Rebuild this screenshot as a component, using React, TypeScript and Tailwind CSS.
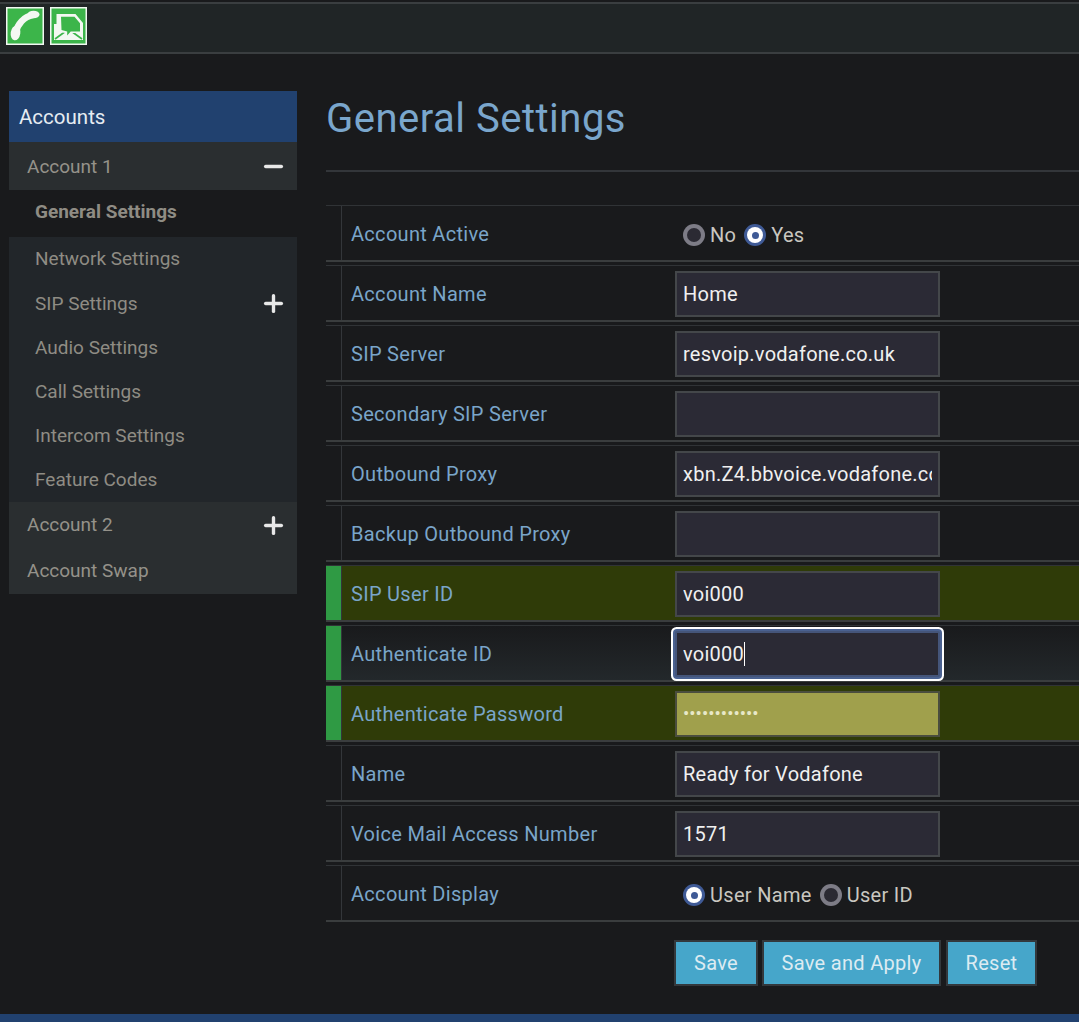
import React from 'react';
import { Minus, Plus } from 'lucide-react';

const SUB_ITEMS = ['Network Settings', 'SIP Settings', 'Audio Settings', 'Call Settings', 'Intercom Settings', 'Feature Codes'];

type Field = {
  label: string;
  value?: string;
  radios?: { label: string; checked: boolean }[];
  required?: 'plain' | 'highlight';
  focused?: boolean;
  password?: boolean;
};

const FIELDS: Field[] = [
  { label: 'Account Active', radios: [{ label: 'No', checked: false }, { label: 'Yes', checked: true }] },
  { label: 'Account Name', value: 'Home' },
  { label: 'SIP Server', value: 'resvoip.vodafone.co.uk' },
  { label: 'Secondary SIP Server', value: '' },
  { label: 'Outbound Proxy', value: 'xbn.Z4.bbvoice.vodafone.co.uk' },
  { label: 'Backup Outbound Proxy', value: '' },
  { label: 'SIP User ID', value: 'voi000', required: 'highlight' },
  { label: 'Authenticate ID', value: 'voi000', required: 'plain', focused: true },
  { label: 'Authenticate Password', value: 'abcdefghijkl', required: 'highlight', password: true },
  { label: 'Name', value: 'Ready for Vodafone' },
  { label: 'Voice Mail Access Number', value: '1571' },
  { label: 'Account Display', radios: [{ label: 'User Name', checked: true }, { label: 'User ID', checked: false }] },
];

function PhoneIcon() {
  return (
    <svg viewBox="0 0 38 38" className="h-[38px] w-[38px]">
      <rect x="0.75" y="0.75" width="36.5" height="36.5" fill="#3cb54a" stroke="#f2f7f2" strokeWidth="1.5" />
      <path d="M27 8C18 9.5 11.5 17 9.5 26" fill="none" stroke="#f4f8f2" strokeWidth="6.5" />
      <ellipse cx="27.5" cy="7.5" rx="6" ry="3.8" fill="#f4f8f2" />
      <ellipse cx="9.5" cy="26" rx="4.8" ry="7.4" transform="rotate(8 9.5 26)" fill="#f4f8f2" />
    </svg>
  );
}

function MailIcon() {
  return (
    <svg viewBox="0 0 37 38" className="h-[38px] w-[37px]">
      <rect x="0.75" y="0.75" width="35.5" height="36.5" fill="#3cb54a" stroke="#f2f7f2" strokeWidth="1.5" />
      {/* envelope body with the two fold lines */}
      <path d="M4 17h29v16H4z" fill="#f4f8f2" />
      <path d="M5 32l11-8M32 32l-11-8" stroke="#3cb54a" strokeWidth="1.6" fill="none" />
      {/* speech bubble */}
      <path d="M6.5 7h19l7.5 9v3l-3 7H21l-4.5 5-1-5-6.500-1-2.500-3z" fill="#f4f8f2" />
      <path d="M11 9.700h13.500l5.500 6.600v8.200h-9.300l-3.500 4v-4l-5.700-1.500z" fill="#3cb54a" />
    </svg>
  );
}

function Radio({ label, checked }: { label: string; checked: boolean }) {
  return (
    <label className="flex items-center gap-[5px] text-[20px] tracking-[0.3px] text-[#c9c7c0]">
      {checked ? (
        <span className="flex h-[22px] w-[22px] items-center justify-center rounded-full bg-[#3f5a96]">
          <span className="flex h-[16px] w-[16px] items-center justify-center rounded-full bg-white">
            <span className="h-[7px] w-[7px] rounded-full bg-[#3f5a96]" />
          </span>
        </span>
      ) : (
        <span className="flex h-[22px] w-[22px] items-center justify-center rounded-full bg-[#7d7c86]">
          <span className="h-[14px] w-[14px] rounded-full bg-[#2b2a33]" />
        </span>
      )}
      {label}
    </label>
  );
}

function FieldRow({ field }: { field: Field }) {
  const rowBg =
    field.required === 'highlight'
      ? 'bg-[#2f3b08]'
      : field.focused
        ? 'bg-gradient-to-b from-[#191a1c] to-[#23282b]'
        : '';

  let inputTone = 'border-[#44474a] bg-[#2b2a35] text-[#f0f0f0] tracking-[0.25px] text-[20px]';
  if (field.password) inputTone = 'border-[#4a4d3e] bg-[#a0a04c] text-[#e8e8c8] text-[18.7px]';
  if (field.focused) inputTone = 'rounded-[2px] border-[#45557a] bg-[#2b2a35] text-[#f0f0f0] tracking-[0.25px] text-[20px] shadow-[0_0_0_2px_#4a6190,0_0_0_4px_#ffffff]';

  return (
    <div className={`mb-[3px] flex h-[57px] border-t border-b-2 border-t-[#303336] border-b-[#3a3d3e] ${rowBg}`}>
      <div className={`w-[15px] shrink-0 ${field.required ? 'bg-[#2f9a44]' : ''}`} />
      <div className="flex w-[334px] shrink-0 items-center border-l border-l-[#33363a] pl-[9px] pt-[2px] text-[20px] tracking-[0.3px] text-[#7aa5c9]">
        {field.label}
      </div>
      {field.radios ? (
        <div className="flex items-center gap-[8px] pl-[8px] pt-[4px]">
          {field.radios.map((r) => (
            <Radio key={r.label} label={r.label} checked={r.checked} />
          ))}
        </div>
      ) : (
        <div className="relative mt-[2px] self-center">
          <input
            readOnly
            type={field.password ? 'password' : 'text'}
            value={field.value}
            className={`block h-[46px] w-[265px] border-2 px-[6px] outline-none ${inputTone}`}
          />
          {field.focused && <span className="absolute left-[69px] top-[11px] h-[24px] w-px bg-white" />}
        </div>
      )}
    </div>
  );
}

function SubItem({ label, plus }: { label: string; plus?: boolean }) {
  return (
    <div className="flex h-[44.2px] items-center justify-between pl-[26px] pr-[10px] pt-[1px] text-[19px] text-[#8f8c84]">
      {label}
      {plus && <Plus size={27} strokeWidth={3} className="text-[#e8e8e8]" />}
    </div>
  );
}

export default function App() {
  return (
    <div className="flex h-[1022px] w-[1079px] flex-col overflow-hidden bg-[#191a1c] font-['Roboto',sans-serif] antialiased">
      {/* Toolbar */}
      <div className="mt-[2px] flex h-[52px] shrink-0 items-center gap-[6px] border-y-2 border-t-[#3a3e40] border-b-[#3a3e40] bg-[#202526] pb-[4px] pl-[6px]">
        <PhoneIcon />
        <MailIcon />
      </div>

      <div className="flex min-h-0 flex-1 pl-[9px] pt-[37px]">
        {/* Sidebar */}
        <aside className="w-[288px] shrink-0">
          <div className="flex h-[51px] items-center bg-[#21416f] pl-[10px] pt-[1px] text-[20.5px] text-[#e6ecf2]">Accounts</div>
          <div className="flex h-[48px] items-center justify-between bg-[#2a2e30] pl-[18px] pr-[10px] text-[19px] text-[#95928a]">
            <span className="pt-[2px]">Account 1</span>
            <Minus size={27} strokeWidth={3} className="text-[#e8e8e8]" />
          </div>
          <div className="flex h-[47px] items-center pb-[2px] pl-[26px] text-[19px] font-bold text-[#8f8c84]">General Settings</div>
          <div className="bg-[#22262a]">
            {SUB_ITEMS.map((item) => (
              <SubItem key={item} label={item} plus={item === 'SIP Settings'} />
            ))}
          </div>
          <div className="bg-[#2a2e30] text-[19px] text-[#95928a]">
            <div className="flex h-[46px] items-center justify-between pl-[18px] pr-[10px]">
              Account 2
              <Plus size={27} strokeWidth={3} className="text-[#e8e8e8]" />
            </div>
            <div className="flex h-[46px] items-center pl-[18px]">Account Swap</div>
          </div>
        </aside>

        {/* Main panel */}
        <main className="ml-[29px] min-w-0 flex-1">
          <h1 className="h-[79px] pt-[2px] text-[40px] leading-[52px] tracking-[0.5px] text-[#7aa6cc]">General Settings</h1>
          <div className="mb-[33px] h-[2px] bg-[#33363a]" />
          {FIELDS.map((f) => (
            <FieldRow key={f.label} field={f} />
          ))}
          <div className="ml-[348px] mt-[18px] flex text-[20px] tracking-[0.3px] text-[#dcebf2]">
            <button className="h-[46px] w-[84px] border-2 border-[#33383c] bg-[#46a6ca]">Save</button>
            <button className="ml-[4px] h-[46px] w-[179px] border-2 border-[#33383c] bg-[#46a6ca]">Save and Apply</button>
            <button className="ml-[5px] h-[46px] w-[91px] border-2 border-[#33383c] bg-[#46a6ca]">Reset</button>
          </div>
        </main>
      </div>

      <div className="h-[8px] shrink-0 bg-[#21416f]" />
    </div>
  );
}
